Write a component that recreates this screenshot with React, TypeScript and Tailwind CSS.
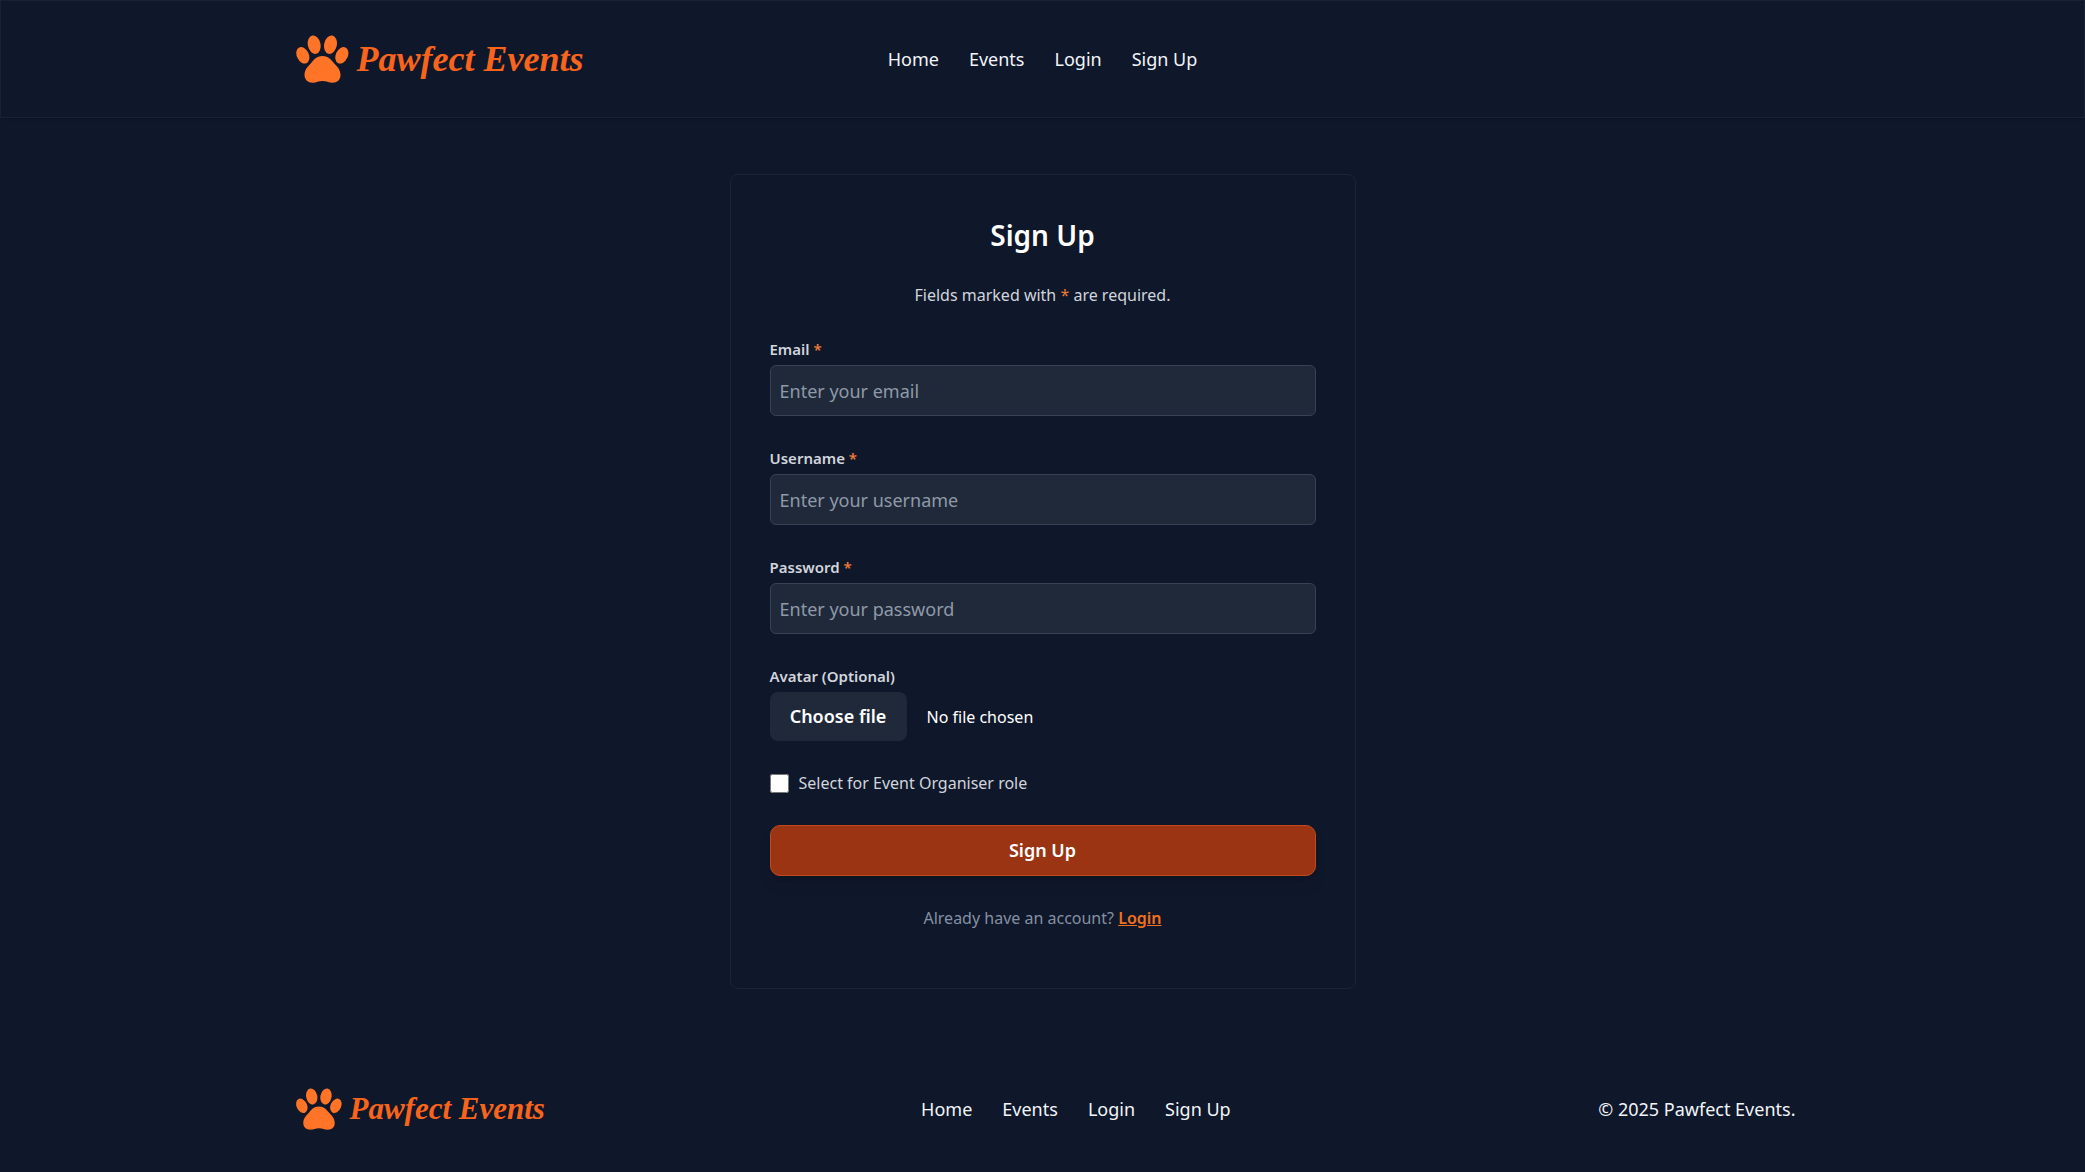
import { useState } from "react";

const links = ["Home", "Events", "Login", "Sign Up"];

function Paw({ className }: { className: string }) {
  return (
    <svg viewBox="50 46 158 144" className={className} fill="#ff7427" aria-hidden="true">
      <ellipse cx="70" cy="107" rx="18" ry="26" transform="rotate(-25 70 107)" />
      <ellipse cx="104" cy="75" rx="19" ry="28" transform="rotate(-12 104 75)" />
      <ellipse cx="153" cy="75" rx="19" ry="28" transform="rotate(12 153 75)" />
      <ellipse cx="187" cy="107" rx="18" ry="26" transform="rotate(25 187 107)" />
      <path d="M129 109C110 109 102 121 95 130C86 140 75 149 75 166C75 181 86 189 99 189C111 189 117 184 129 184C141 184 147 189 159 189C173 189 183 181 183 166C183 149 172 140 163 130C155 121 148 109 129 109Z" />
    </svg>
  );
}

function NavLinks({ label }: { label: string }) {
  return (
    <nav aria-label={label}>
      <ul className="flex gap-[30px] text-[18px] leading-7 text-slate-100">
        {links.map((link) => (
          <li key={link}>
            <a href="#" className="hover:text-orange-500">{link}</a>
          </li>
        ))}
      </ul>
    </nav>
  );
}

function Field({ id, label, type, placeholder }: { id: string; label: string; type: string; placeholder: string }) {
  return (
    <div className="mb-[30px] flex flex-col gap-1">
      <label htmlFor={id} className="text-[15px] leading-6 font-semibold text-gray-300">
        {label} <span className="text-[#f07a35]">*</span>
      </label>
      <input
        id={id}
        type={type}
        required
        placeholder={placeholder}
        className="h-[51px] w-full rounded-md border border-[#374354] bg-[#1f293a] px-[9px] text-[18px] text-white placeholder:text-[#8f99a8]"
      />
    </div>
  );
}

export default function App() {
  const [fileName, setFileName] = useState("No file chosen");

  return (
    <div className="flex min-h-screen flex-col bg-[#0f172a] font-['Segoe_UI','Noto_Sans',sans-serif] text-white">
      <header className="border border-[#182234] shadow-sm">
        <div className="mx-auto grid h-[116px] w-full max-w-[1506px] grid-cols-[1fr_auto_1fr] items-center">
          <a href="#" className="flex items-center gap-2 pl-1.5">
            <Paw className="h-12 w-[53px]" />
            <span className="font-['Liberation_Serif',serif] text-[36px] leading-12 font-bold whitespace-nowrap text-[#f9641c] italic">Pawfect Events</span>
          </a>
          <NavLinks label="Main" />
        </div>
      </header>

      <main className="flex flex-1 justify-center px-4 pt-14">
        <section className="w-full max-w-[626px] self-start rounded-lg border border-[#1a2437] px-[39px] pt-10 pb-[58px]">
          <h1 className="text-center text-[28px] leading-10 font-semibold">Sign Up</h1>
          <p className="mt-7 mb-[30px] text-center text-[16px] leading-6 text-gray-300">
            Fields marked with <span className="text-[#f07a35]">*</span> are required.
          </p>
          <form onSubmit={(e) => e.preventDefault()}>
            <Field id="email" label="Email" type="email" placeholder="Enter your email" />
            <Field id="username" label="Username" type="text" placeholder="Enter your username" />
            <Field id="password" label="Password" type="password" placeholder="Enter your password" />
            <div className="flex flex-col gap-1">
              <label htmlFor="avatar" className="text-[15px] leading-6 font-semibold text-gray-300">Avatar (Optional)</label>
              <div className="flex items-center gap-5">
                <input
                  id="avatar"
                  type="file"
                  className="peer sr-only"
                  onChange={(e) => setFileName(e.target.files?.[0]?.name ?? "No file chosen")}
                />
                <label htmlFor="avatar" className="flex h-[49px] w-[137px] cursor-pointer items-center justify-center rounded-lg bg-[#1f293a] text-[18px] font-semibold whitespace-nowrap">
                  Choose file
                </label>
                <span className="text-[16px] leading-6">{fileName}</span>
              </div>
            </div>
            <div className="my-[30px] flex items-center gap-2.5">
              <input id="organiser" type="checkbox" className="size-[19px]" />
              <label htmlFor="organiser" className="text-[16px] leading-6 text-gray-300">Select for Event Organiser role</label>
            </div>
            <button type="submit" className="h-[51px] w-full cursor-pointer rounded-[10px] border border-[#c2491c] bg-[#9a3412] text-[18px] font-semibold shadow-lg">
              Sign Up
            </button>
          </form>
          <p className="mt-[30px] text-center text-[16px] leading-6 text-[#8590a3]">
            Already have an account? <a href="#" className="font-semibold text-[#f2701c] underline">Login</a>
          </p>
        </section>
      </main>

      <footer>
        <div className="mx-auto flex h-[126px] w-full max-w-[1506px] items-center justify-between">
          <a href="#" className="flex w-[264px] items-center gap-2 pl-1.5">
            <Paw className="h-[42px] w-[46px]" />
            <span className="font-['Liberation_Serif',serif] text-[31px] leading-10 font-bold whitespace-nowrap text-[#f9641c] italic">Pawfect Events</span>
          </a>
          <NavLinks label="Footer" />
          <p className="text-[18px] leading-7 text-slate-100">© 2025 Pawfect Events.</p>
        </div>
      </footer>
    </div>
  );
}
